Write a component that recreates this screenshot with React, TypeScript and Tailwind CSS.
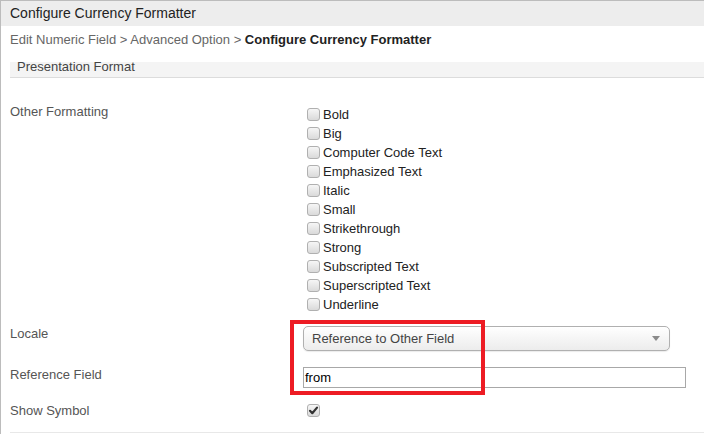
import React from "react";

const items = [
  "Bold",
  "Big",
  "Computer Code Text",
  "Emphasized Text",
  "Italic",
  "Small",
  "Strikethrough",
  "Strong",
  "Subscripted Text",
  "Superscripted Text",
  "Underline",
];

function Box({ checked = false }: { checked?: boolean }) {
  return (
    <span className="relative inline-block w-[13px] h-[13px] shrink-0 rounded-[3px] border border-[#b0b0b0] bg-gradient-to-b from-[#f6f6f6] to-[#dadada]">
      {checked && (
        <svg viewBox="0 0 13 13" className="absolute left-[-1px] top-[-1px] w-[13px] h-[13px]">
          <path d="M3 6.8 L5.3 9.2 L10 3.6" fill="none" stroke="#333" strokeWidth="2.2" strokeLinecap="round" strokeLinejoin="round" />
        </svg>
      )}
    </span>
  );
}

export default function App() {
  return (
    <div
      className="relative w-[704px] h-[434px] overflow-hidden bg-white border-l border-t border-[#bcbcbc]"
      style={{ fontFamily: '"Liberation Sans", Arial, sans-serif' }}
    >
      <div className="h-[25px] bg-[#ededed] pl-[9px] flex items-center text-[14px] text-[#222]">
        Configure Currency Formatter
      </div>
      <div className="h-[36px] pl-[9px] pt-[6px] flex items-start leading-[15px] text-[13px] text-[#666]">
        <span>Edit Numeric Field &gt; Advanced Option &gt;&nbsp;</span>
        <span className="font-bold text-[#222]">Configure Currency Formatter</span>
      </div>
      <div className="h-[372px] overflow-hidden">
        <div className="mt-[-5px] ml-[9px] h-[21px] bg-[#f4f4f4] border-b border-[#dcdcdc] pl-[7px] flex items-center text-[13px] text-[#444]">
          Presentation Format
        </div>
        <div className="pl-[9px] text-[13px]">
          <div className="grid grid-cols-[293px_1fr] pt-[26px]">
            <div className="leading-[15px] text-[#555]">Other Formatting</div>
            <div className="pl-[4px] mt-[1px] flex flex-col">
              {items.map((t) => (
                <div key={t} className="h-[19px] flex items-center gap-[3px] text-[#222]">
                  <Box />
                  <span>{t}</span>
                </div>
              ))}
            </div>
          </div>
          <div className="grid grid-cols-[293px_1fr] mt-[12px]">
            <div className="leading-[15px] text-[#555]">Locale</div>
            <div className="w-[367px] h-[25px] rounded-[5px] border border-[#b0b0b0] bg-gradient-to-b from-white to-[#ececec] shadow-[0_1px_1px_rgba(0,0,0,0.08)] flex items-center pl-[8px] pr-[9px] text-[#444]">
              <span className="flex-1">Reference to Other Field</span>
              <svg width="8" height="5" viewBox="0 0 8 5">
                <path d="M0 0 L8 0 L4 5 Z" fill="#8a8a8a" />
              </svg>
            </div>
          </div>
          <div className="grid grid-cols-[293px_1fr] mt-[16px]">
            <div className="leading-[15px] text-[#555]">Reference Field</div>
            <div className="w-[383px] h-[21px] border border-[#a8a8a8] flex items-center pl-[1px] text-black">
              from
            </div>
          </div>
          <div className="grid grid-cols-[293px_1fr] mt-[15px] pb-[14px] border-b border-[#e8e8e8]">
            <div className="leading-[15px] text-[#555]">Show Symbol</div>
            <div className="pl-[4px] h-[15px] flex items-center">
              <Box checked />
            </div>
          </div>
        </div>
      </div>
      <div className="absolute left-[289px] top-[319px] w-[195px] h-[75px] border-[4px] border-[#ed1c24]" />
    </div>
  );
}
